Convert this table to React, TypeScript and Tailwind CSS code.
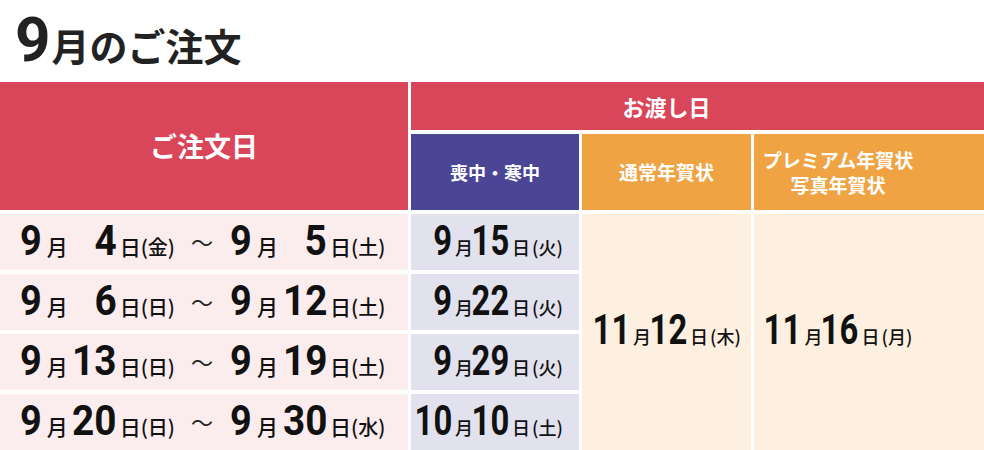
const jp = "font-['Noto_Sans_CJK_JP','Noto_Sans',sans-serif]";

type Day = { m: string; d: string; w: string };

// condensed digits: Roboto squeezed sideways inside a fixed, right-aligned slot
function Num({ v, slot, sx, size = "text-[42px]" }: { v: string; slot: string; sx: string; size?: string }) {
  return (
    <span className={`inline-flex ${slot} justify-end`}>
      <span
        className={`inline-block shrink-0 origin-right ${sx} font-['Roboto',sans-serif] ${size} font-bold leading-none`}
      >
        {v}
      </span>
    </span>
  );
}

function WideDate({ m, d, w }: Day) {
  return (
    <span className="inline-flex items-baseline text-[#111]">
      <Num v={m} slot="w-[21px]" sx="scale-x-[0.88]" size="text-[43px]" />
      <span className={`${jp} ml-[5px] text-[21px] font-medium`}>月</span>
      <Num v={d} slot="w-[49px]" sx="scale-x-[0.9]" size="text-[43px]" />
      <span className={`${jp} ml-[3px] text-[21px] font-medium`}>日</span>
      <span className={`${jp} text-[20px] font-medium`}>({w})</span>
    </span>
  );
}

function NarrowDate({ m, d, w, mslot = "w-[37px]", dslot = "w-[36px]" }: Day & { mslot?: string; dslot?: string }) {
  return (
    <span className="inline-flex items-baseline text-[#111]">
      <Num v={m} slot={mslot} sx="scale-x-[0.78]" />
      <span className={`${jp} ml-[3px] text-[18px] font-medium`}>月</span>
      <Num v={d} slot={dslot} sx="scale-x-[0.78]" />
      <span className={`${jp} ml-[3px] text-[18px] font-medium`}>日</span>
      <span className={`${jp} ml-[2px] text-[18px] font-medium`}>({w})</span>
    </span>
  );
}

const ranges: [Day, Day][] = [
  [{ m: "9", d: "4", w: "金" }, { m: "9", d: "5", w: "土" }],
  [{ m: "9", d: "6", w: "日" }, { m: "9", d: "12", w: "土" }],
  [{ m: "9", d: "13", w: "日" }, { m: "9", d: "19", w: "土" }],
  [{ m: "9", d: "20", w: "日" }, { m: "9", d: "30", w: "水" }],
];

const mourning: Day[] = [
  { m: "9", d: "15", w: "火" },
  { m: "9", d: "22", w: "火" },
  { m: "9", d: "29", w: "火" },
  { m: "10", d: "10", w: "土" },
];

export default function App() {
  return (
    <div className={`${jp} h-[450px] w-[984px] overflow-hidden bg-white`}>
      <div className="flex h-[82px] items-baseline pl-[15px] pt-[9px] text-[#222]">
        <span className="font-['Roboto',sans-serif] text-[62px] font-bold leading-none">9</span>
        <span className="ml-[1px] text-[38px] font-bold leading-none">月のご注文</span>
      </div>

      <div className="grid grid-cols-[408px_168px_169px_1fr] grid-rows-[48px_76px_56px_56px_56px_56px] gap-x-[3px] gap-y-[4px]">
        <div className="row-span-2 flex items-center justify-center bg-[#da4659] text-[27px] font-bold text-white">
          ご注文日
        </div>
        <div className="col-span-3 flex items-center justify-center bg-[#da4659] pr-[62px] text-[22px] font-bold text-white">
          お渡し日
        </div>
        <div className="flex items-center justify-center bg-[#4b4596] text-[18px] font-bold text-white">
          喪中・寒中
        </div>
        <div className="flex items-center justify-center bg-[#f0a343] text-[19px] font-bold text-white">
          通常年賀状
        </div>
        <div className="flex flex-col items-center justify-center bg-[#f0a343] pr-[62px] text-[19px] font-bold leading-[25px] text-white">
          <span>プレミアム年賀状</span>
          <span>写真年賀状</span>
        </div>

        {ranges.map(([a, b], i) => (
          <div
            key={`r${i}`}
            className="flex items-center justify-center bg-[#fbeced] pb-[2px] pr-[2px]"
            style={{ gridColumn: 1, gridRow: i + 3 }}
          >
            <WideDate {...a} />
            <span className="ml-[16px] mr-[18px] self-center text-[22px] text-[#222]">～</span>
            <WideDate {...b} />
          </div>
        ))}

        {mourning.map((x, i) => (
          <div
            key={`m${i}`}
            className="flex items-center justify-center bg-[#e2e2ef] pb-[2px] pr-[12px]"
            style={{ gridColumn: 2, gridRow: i + 3 }}
          >
            <NarrowDate {...x} />
          </div>
        ))}

        <div className="col-start-3 row-span-4 row-start-3 flex items-center justify-center bg-[#fdf0e0] pb-[4px] pl-[8px]">
          <NarrowDate m="11" d="12" w="木" mslot="w-[30px]" />
        </div>
        <div className="col-start-4 row-span-4 row-start-3 flex items-center justify-center bg-[#fdf0e0] pb-[4px] pl-[8px] pr-[62px]">
          <NarrowDate m="11" d="16" w="月" mslot="w-[30px]" />
        </div>
      </div>
    </div>
  );
}
